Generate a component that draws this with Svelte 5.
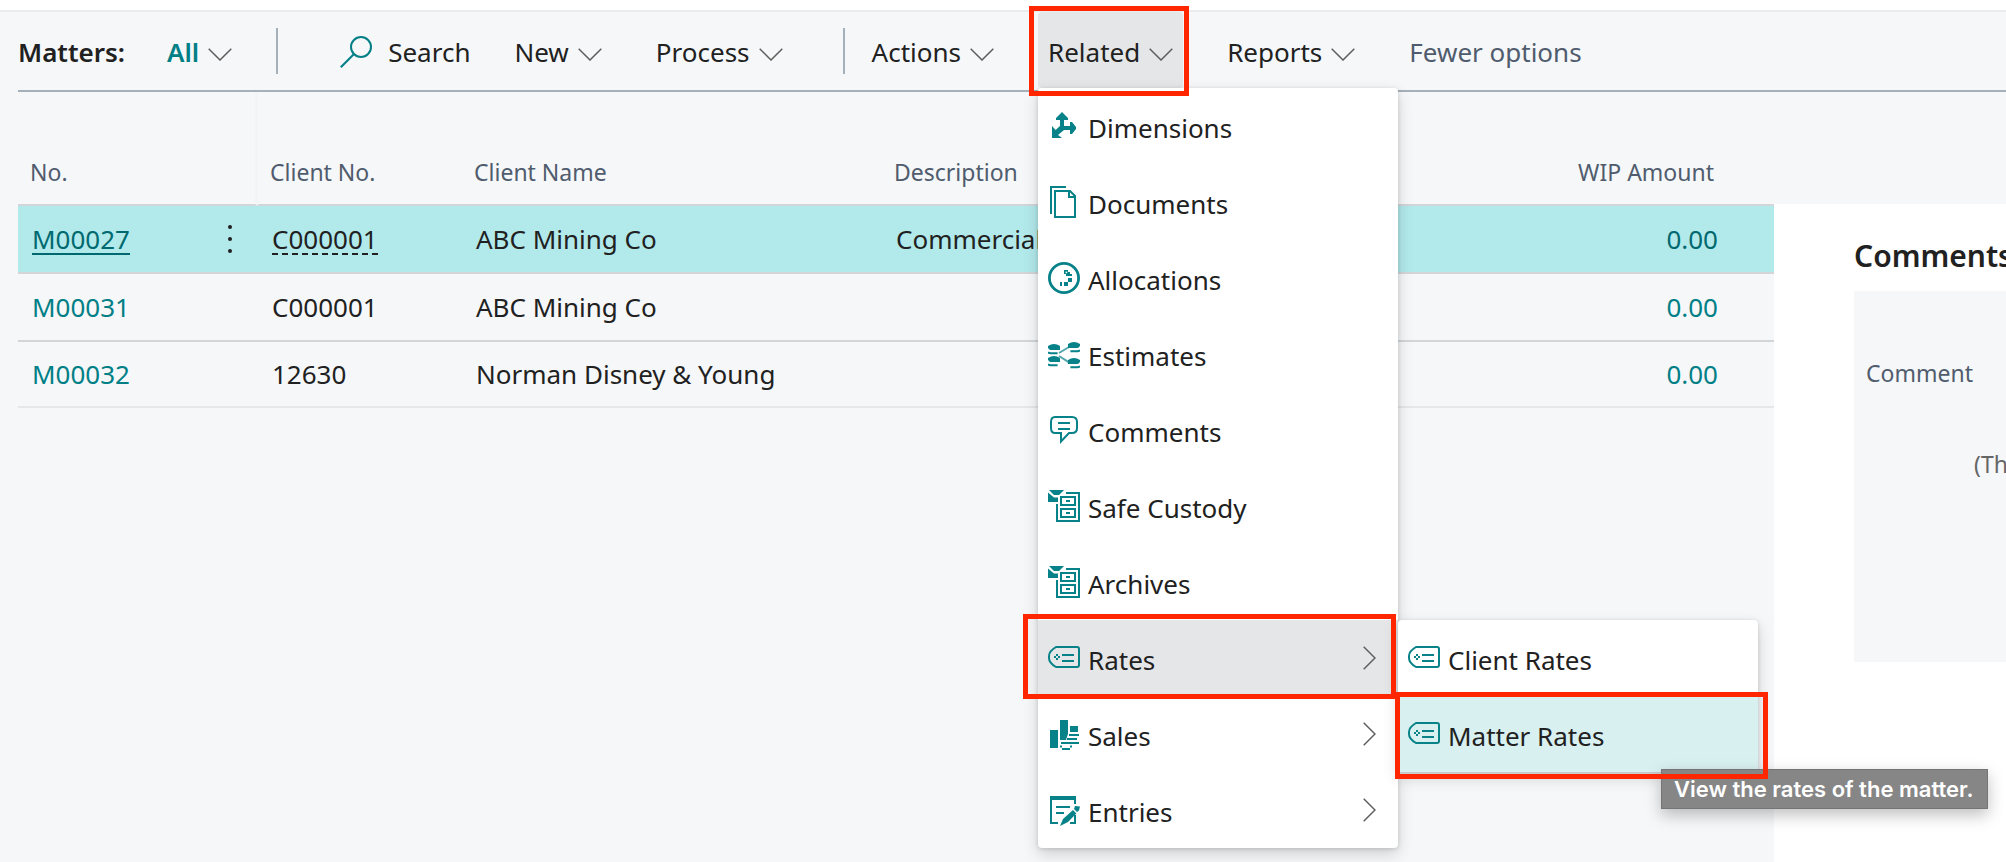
<script>
	const matters = [
		{no: "M00027", client: "C000001", name: "ABC Mining Co", description: "Commercial", wip: "0.00"},
		{no: "M00031", client: "C000001", name: "ABC Mining Co", description: "", wip: "0.00"},
		{no: "M00032", client: "12630", name: "Norman Disney & Young", description: "", wip: "0.00"},
	];
	let selected = $state("M00027");

	const related = [
		{label: "Dimensions", icon: "dimensions"},
		{label: "Documents", icon: "documents"},
		{label: "Allocations", icon: "allocations"},
		{label: "Estimates", icon: "estimates"},
		{label: "Comments", icon: "comments"},
		{label: "Safe Custody", icon: "cabinet"},
		{label: "Archives", icon: "cabinet"},
		{label: "Rates", icon: "tag", children: ["Client Rates", "Matter Rates"]},
		{label: "Sales", icon: "sales", more: true},
		{label: "Entries", icon: "entries", more: true},
	];
</script>

{#snippet chevron()}
	<svg class="chevron" viewBox="0 0 24 13" aria-hidden="true"><path d="M.7.7 12 12 23.3.7" /></svg>
{/snippet}

{#snippet icon(name)}
	<svg class="icon" viewBox="0 0 16 16" aria-hidden="true">
		{#if name === "dimensions"}
			<path class="solid" d="M7 1 10 4v1H8v3h3V6h1l2 2.500v1L12 12h-1v-2H8l-3 2.500L7 14H2V8l1.800 2L6 8V5H4V4z" />
		{:else if name === "documents"}
			<path d="M1.500 14V.5H9M3.500 2.500h7.500l2.500 2.500v10.500h-10zM10.500 2.500v3h3" />
		{:else if name === "allocations"}
			<circle class="thick" cx="8" cy="8" r="7.300" />
			<path class="solid" d="M8 4h2v1h1v2H9V6H8zM11 6h1v1h-1zM10 8h2v2h-2zM8 10h2v2H8zM6 10h1v2H6z" />
			<path class="hole" d="M8.800 4.800h.8v.8h-.8z" />
		{:else if name === "estimates"}
			<path class="solid" d="M0 4q3-2 6 0v2H1L0 5zM0 10q3-2 6 0v2H1l-1-1zM10 3q3-2 6 0v1l-1 1h-5zM10 11q3-2 6 0v1l-1 1h-5z" />
			<path d="M0 7.100q.5.500 1.200.5h3.600M0 13.100q.5.500 1.200.5h3.600M16 6.100q-.5.500-1.200.5h-3.600M16 14.100q-.5.500-1.200.5h-3.600" />
			<path class="dim" d="M5.500 7.500 10.500 4.500M5.500 9l5 3.200" />
		{:else if name === "comments"}
			<path d="M3.500 1.500h8.500q2.500 0 2.500 2.500v3q0 2.500-2.500 2.500H10.500L6.500 13.700V9.500h-3Q1.500 9.500 1.500 7V4q0-2.500 2-2.500zM5 4.500h6M5 7.500h6" />
		{:else if name === "cabinet"}
			<path d="M4.500 7v8.500h11v-14H9M6.500 3.500h7v4h-7zM6.500 9.500h7v4h-7zM9 5.500h2M9 11.500h2" />
			<path class="solid" d="M.5 0H8L5.500 2.500H3zM0 1.300 3 3.800h2V6H0z" />
		{:else if name === "tag"}
			<path d="M4 2.500h10.500q1 0 1 1v8q0 1-1 1H4Q.5 10.500.5 8V7Q.5 4.500 4 2.500zM7 6.500h6M7 9.500h6" />
			<path class="solid" d="M4 6h1v1H4zM3 7h1v1H3zM5 7h1v1H5zM4 8h1v1H4z" />
		{:else if name === "sales"}
			<path class="solid" d="M1 6h4v9H1zM6 1h4v7L9 11H6zM11 4h4v3h-4z" />
			<path d="M10.500 8.500h5M9.500 10.500h5M11 12.500h4.500M6.500 12.500h5M6 14.200h1M11 14.200h1M7 15.500h4" />
		{:else if name === "entries"}
			<path d="M5 14.500H1.500v-13h12V5M13.500 10.500v4H11M4 6.500h7M4 9.500h4" />
			<path class="solid" d="M1 1h13v2H1zM13.500 6l2.500.3-.5 2-1 .7-1.500-1.500zM12.500 8l1.700 1.700L10 14l-4 2 1.500-3.500z" />
		{/if}
	</svg>
{/snippet}

<div class="page">
	<nav class="actions">
		<h1>Matters:</h1>
		<button class="view">All {@render chevron()}</button>
		<span class="divider"></span>
		<button class="search">
			<svg viewBox="0 0 32 32" aria-hidden="true"><circle cx="21" cy="11" r="10" /><path d="M14 18 .8 31.200" /></svg>
			Search
		</button>
		<button>New {@render chevron()}</button>
		<button>Process {@render chevron()}</button>
		<span class="divider second"></span>
		<button>Actions {@render chevron()}</button>
		<div class="dropdown">
			<button class="open" aria-expanded="true">Related {@render chevron()}</button>
			<ul class="menu">
				{#each related as item}
					<li>
						<button class:active={item.children}>
							{@render icon(item.icon)}
							<span>{item.label}</span>
							{#if item.children || item.more}
								<svg class="more" viewBox="0 0 13 24" aria-hidden="true"><path d="M.7.7 12 12 .7 23.300" /></svg>
							{/if}
						</button>
						{#if item.children}
							<ul class="menu submenu">
								{#each item.children as child, i}
									<li>
										<button class:hover={i === 1}>{@render icon("tag")}<span>{child}</span></button>
										{#if i === 1}
											<div class="tooltip" role="tooltip">View the rates of the matter.</div>
											<div class="mark mark-child"></div>
										{/if}
									</li>
								{/each}
							</ul>
							<div class="mark mark-item"></div>
						{/if}
					</li>
				{/each}
			</ul>
			<div class="mark mark-button"></div>
		</div>
		<button>Reports {@render chevron()}</button>
		<button class="fewer">Fewer options</button>
	</nav>

	<main>
		<div class="list">
			<table>
				<colgroup>
					<col class="c-no"><col class="c-dots"><col class="c-client"><col class="c-name"><col class="c-desc"><col>
				</colgroup>
				<thead>
					<tr>
						<th>No.</th>
						<th class="frozen" aria-label="Row menu"></th>
						<th>Client No.</th>
						<th>Client Name</th>
						<th>Description</th>
						<th class="amount">WIP Amount</th>
					</tr>
				</thead>
				<tbody>
					{#each matters as row}
						<tr class:selected={row.no === selected} onclick={() => (selected = row.no)}>
							<td><a href="#{row.no}">{row.no}</a></td>
							<td class="dots">
								{#if row.no === selected}
									<button aria-label="More options">
										<svg viewBox="0 0 4 28" aria-hidden="true"><circle cx="2" cy="2" r="2" /><circle cx="2" cy="14" r="2" /><circle cx="2" cy="26" r="2" /></svg>
									</button>
								{/if}
							</td>
							<td><span class="client">{row.client}</span></td>
							<td>{row.name}</td>
							<td>{row.description}</td>
							<td class="amount"><a href="#wip-{row.no}">{row.wip}</a></td>
						</tr>
					{/each}
				</tbody>
			</table>
		</div>
		<aside>
			<h2>Comments</h2>
			<div class="card">
				<div class="label">Comment</div>
				<div class="empty">(Th</div>
			</div>
		</aside>
	</main>
</div>

<style>
	:global(body) {
		--bg: #f5f7f9;
		--text: #212121;
		--teal: #007f86;
		--slate: #505c6d;
		--line: #d3d6d9;
		--rule: #a6b0b9;
		--red: #ff2600;
		background: var(--bg);
		color: var(--text);
		font-family: "Noto Sans", "Open Sans", sans-serif;
		font-size: 26px;
		line-height: 36px;
		overflow: hidden;
	}
	.page {
		display: flex;
		flex-direction: column;
		min-height: 100vh;
		box-sizing: border-box;
		border-top: 10px solid #fff;
	}
	button {
		display: flex;
		align-items: center;
		gap: 8px;
		padding: 0 10px;
		border: 0;
		background: none;
		color: inherit;
		font: inherit;
		white-space: nowrap;
	}
	svg {
		flex: none;
		fill: none;
	}
	.actions {
		display: flex;
		align-items: flex-start;
		height: 80px;
		padding-left: 18px;
		border-top: 2px solid #e9ebed;
		background: linear-gradient(var(--rule), var(--rule)) 18px 100% / 100% 2px no-repeat;
	}
	.actions > button,
	.dropdown > button {
		gap: 9px;
		height: 76px;
		padding-top: 4px;
	}
	h1 {
		margin: 0 32px 0 0;
		font-size: 26px;
		font-weight: 600;
		line-height: 80px;
	}
	.view {
		color: var(--teal);
		font-weight: 600;
	}
	.divider {
		width: 2px;
		height: 46px;
		margin: 16px 52px 0 34px;
		background: var(--rule);
	}
	.divider.second {
		margin: 16px 17px 0 50px;
	}
	.chevron {
		width: 24px;
		height: 13px;
		margin-top: 4px;
		stroke: #605e5c;
		stroke-width: 1.5;
	}
	.actions > .search {
		gap: 16px;
		margin-right: 24px;
	}
	.search svg {
		width: 32px;
		height: 32px;
		stroke: var(--teal);
		stroke-width: 2;
	}
	.search ~ button {
		margin-right: 34px;
	}
	.search + button + button {
		margin-right: 0;
	}
	.dropdown {
		position: relative;
		z-index: 1;
		margin-right: 34px;
	}
	.open {
		border-radius: 4px;
		background: #e5e6e8;
	}
	.fewer {
		color: var(--slate);
	}

	.menu {
		position: absolute;
		top: 100%;
		left: 0;
		width: 360px;
		margin: 0;
		padding: 0;
		border-radius: 4px;
		background: #fff;
		box-shadow: 0 6px 16px rgba(0, 0, 0, .16), 0 1px 4px rgba(0, 0, 0, .14);
		list-style: none;
	}
	.menu li {
		position: relative;
	}
	.menu button {
		width: 100%;
		height: 76px;
	}
	.menu span {
		padding-top: 4px;
	}
	.menu .active {
		background: #e5e6e8;
	}
	.menu .hover {
		background: #d9f0f0;
	}
	.submenu {
		top: 0;
		left: 100%;
		z-index: 1;
	}
	.icon {
		width: 32px;
		height: 32px;
		stroke: #078288;
		stroke-width: 1;
	}
	.icon .solid {
		fill: #078288;
		stroke: none;
	}
	.icon .hole {
		fill: #fff;
		stroke: none;
	}
	.icon .thick {
		stroke-width: 1.4;
	}
	.icon .dim {
		opacity: .7;
	}
	.more {
		width: 13px;
		height: 24px;
		margin-left: auto;
		margin-right: 12px;
		stroke: #605e5c;
		stroke-width: 1.5;
	}
	.mark {
		position: absolute;
		z-index: 2;
		border: 5px solid var(--red);
		pointer-events: none;
	}
	.mark-button {
		inset: -6px -6px -8px -9px;
	}
	.mark-item {
		inset: -6px 2px -3px -15px;
	}
	.mark-child {
		inset: -4px -10px -7px -3px;
	}
	.tooltip {
		position: absolute;
		top: 73px;
		left: 263px;
		padding: 0 14px 0 12px;
		border: 1px solid #757575;
		background: #868686;
		box-shadow: 0 6px 16px rgba(0, 0, 0, .25);
		color: #fff;
		font-family: Inter, "Liberation Sans", sans-serif;
		font-size: 22px;
		font-weight: 600;
		line-height: 38px;
		white-space: nowrap;
	}

	main {
		display: flex;
		flex: 1;
	}
	.list {
		flex: 1;
		padding-left: 18px;
	}
	table {
		width: 100%;
		border-collapse: separate;
		border-spacing: 0;
		table-layout: fixed;
	}
	.c-no { width: 183px; }
	.c-dots { width: 57px; }
	.c-client { width: 204px; }
	.c-name { width: 420px; }
	.c-desc { width: 420px; }
	th {
		box-sizing: border-box;
		height: 114px;
		padding: 48px 0 0 12px;
		border-bottom: 2px solid var(--line);
		color: var(--slate);
		font-size: 23px;
		font-weight: 400;
		text-align: left;
	}
	.frozen {
		border-right: 3px solid #f3f4f5;
	}
	td {
		height: 66px;
		padding: 0 0 0 14px;
		border-bottom: 2px solid var(--line);
		white-space: nowrap;
	}
	tbody tr:last-child td {
		height: 64px;
		border-color: #e5e7e9;
	}
	th.amount {
		padding-right: 60px;
		text-align: right;
	}
	td.amount {
		padding-right: 56px;
		text-align: right;
	}
	a {
		color: var(--teal);
		text-decoration: none;
	}
	.selected {
		background: #b2e9eb;
	}
	.selected a {
		color: #006970;
	}
	.selected td:first-child a {
		display: inline-block;
		border-bottom: 2px solid;
		line-height: 28px;
	}
	.selected .client {
		display: inline-block;
		border-bottom: 2px dashed;
		line-height: 28px;
	}
	.dots {
		padding: 0;
	}
	.dots button {
		margin: 0 auto;
	}
	.dots svg {
		width: 4px;
		height: 28px;
		fill: var(--text);
	}

	aside {
		width: 152px;
		margin-top: 112px;
		padding-left: 80px;
		background: #fff;
		overflow: hidden;
	}
	h2 {
		margin: 0;
		padding: 32px 0 15px;
		font-size: 30px;
		font-weight: 600;
		line-height: 40px;
	}
	.card {
		box-sizing: border-box;
		height: 371px;
		padding: 64px 0 0 12px;
		background: var(--bg);
		font-size: 23px;
	}
	.label {
		color: var(--slate);
	}
	.empty {
		margin-top: 55px;
		padding-left: 108px;
		color: #666;
		white-space: nowrap;
	}
</style>
